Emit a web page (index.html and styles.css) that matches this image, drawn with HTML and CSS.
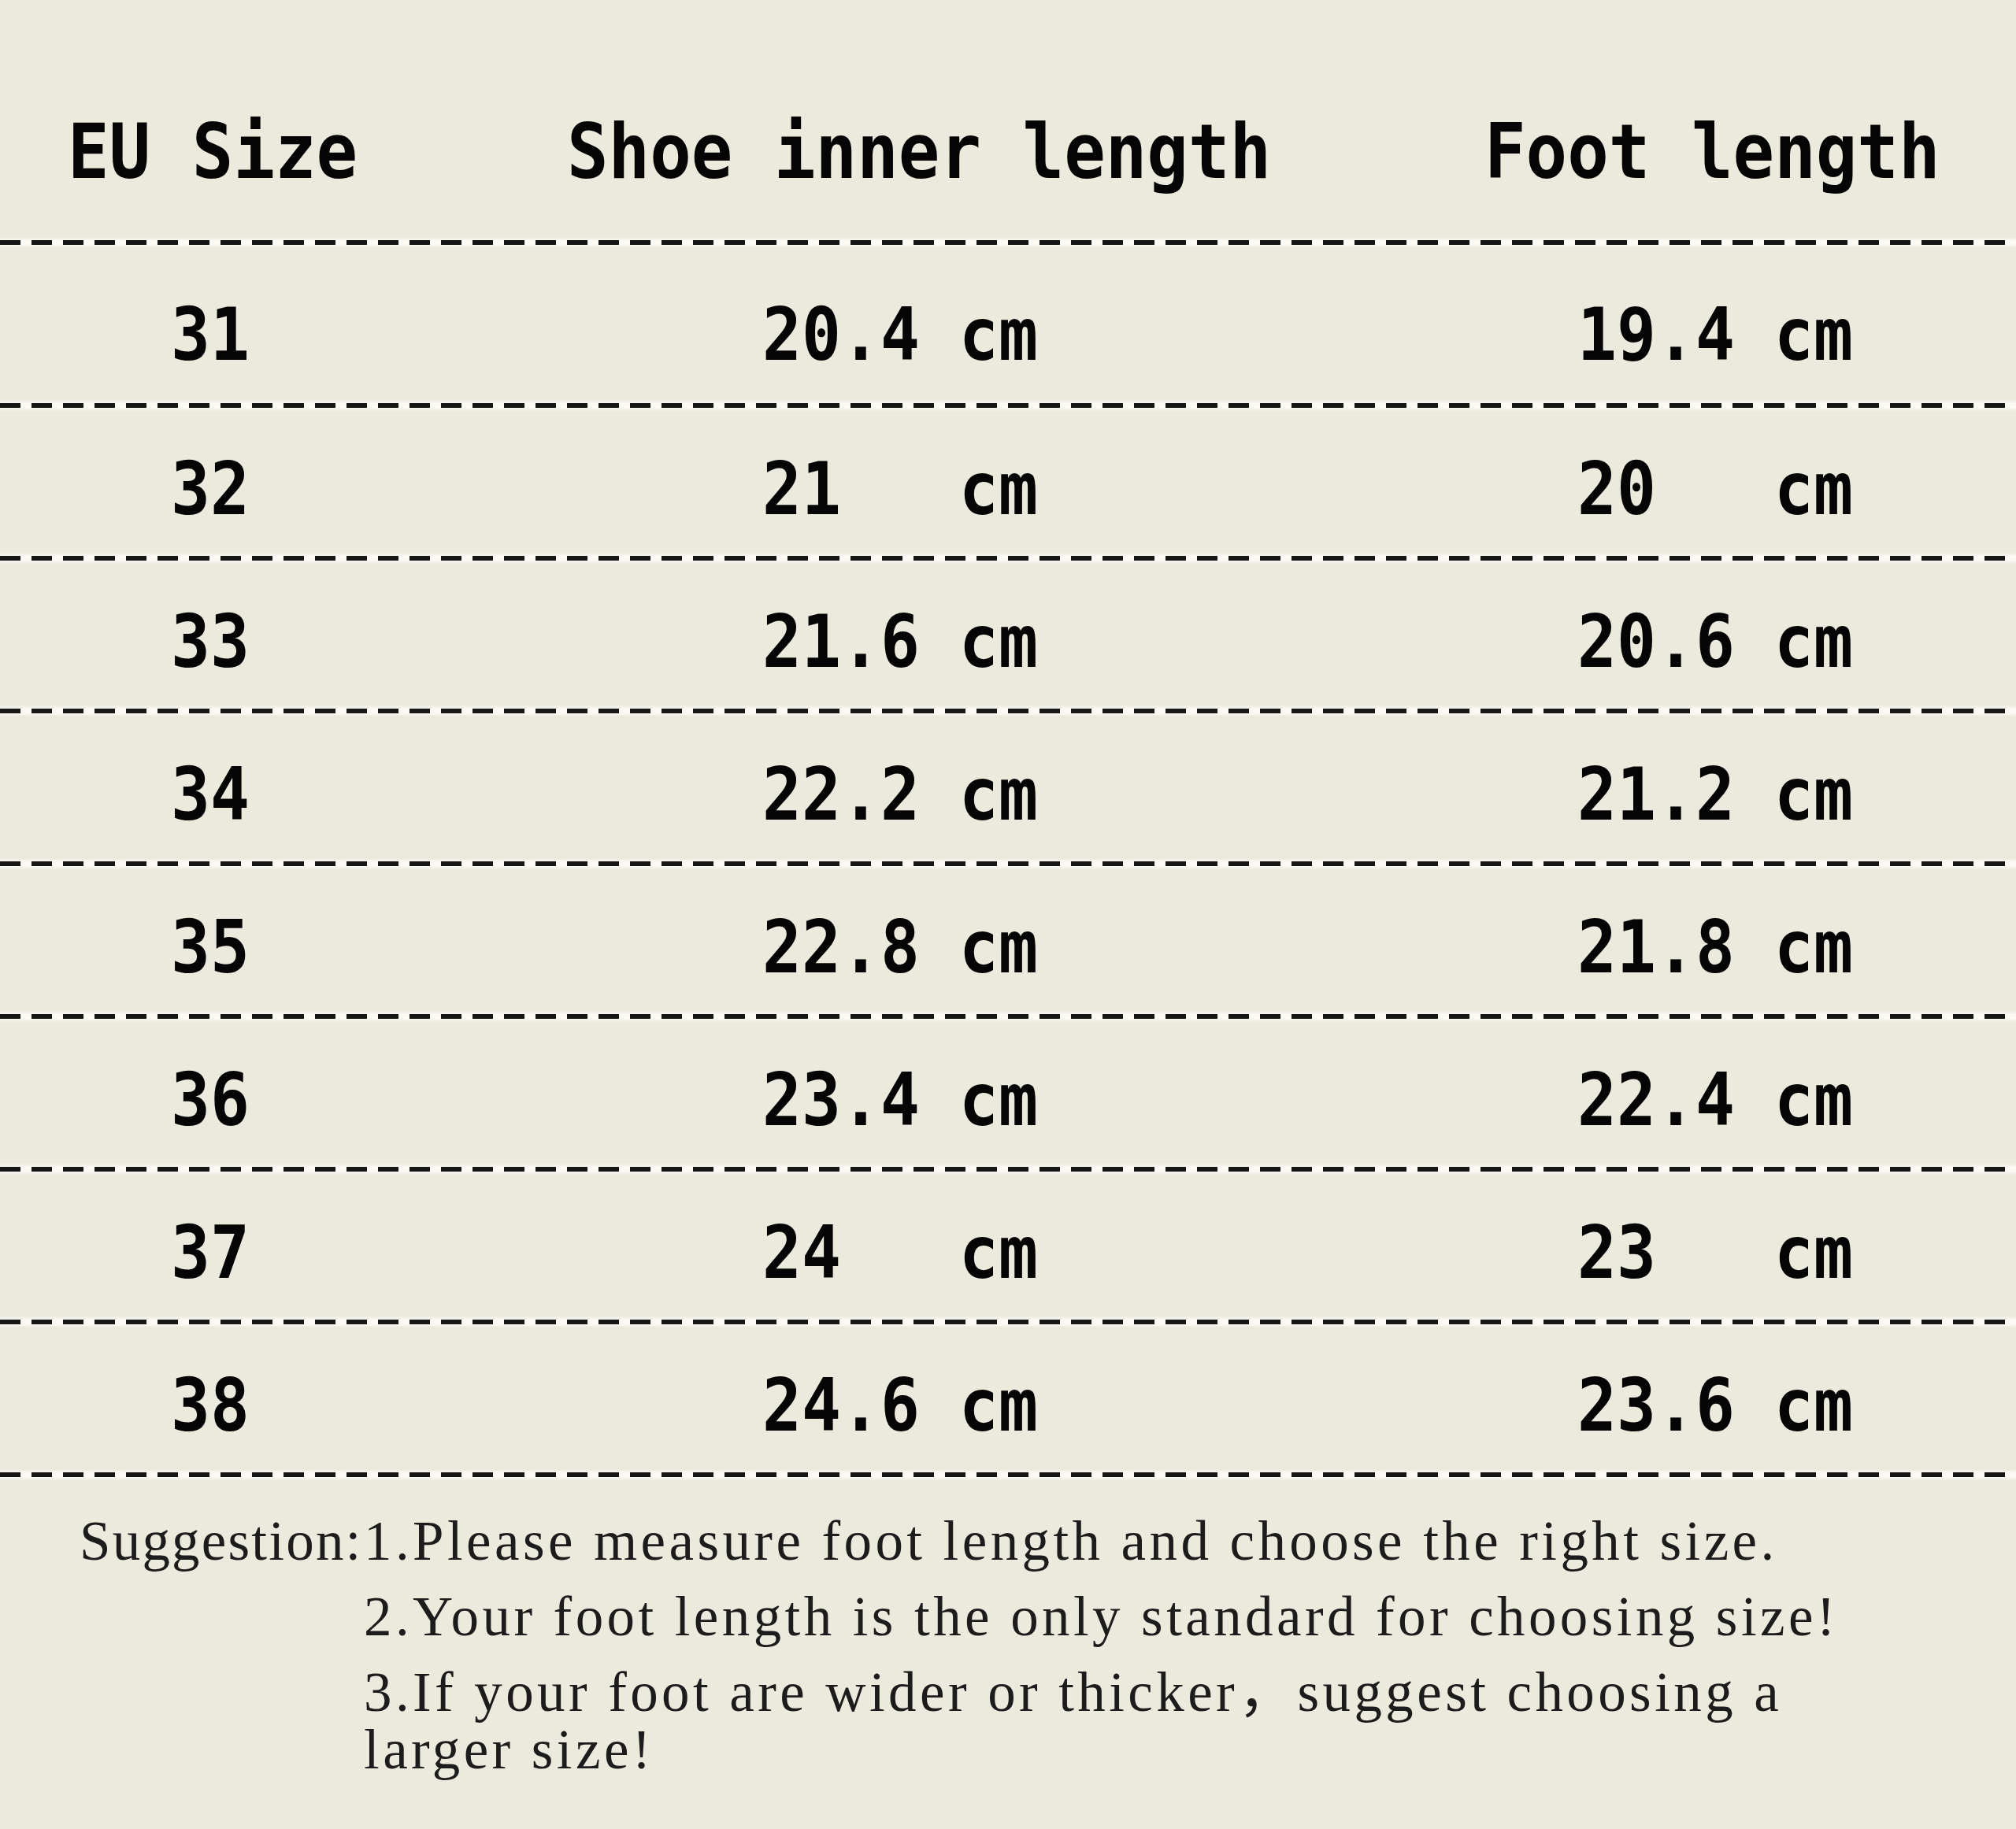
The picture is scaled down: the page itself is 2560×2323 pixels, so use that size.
FILE: index.html
```html
<!DOCTYPE html>
<html lang="en">
<head>
<meta charset="utf-8">
<title>Size Chart</title>
<link rel="stylesheet" href="styles.css">
</head>
<body>
<main class="chart">
  <div class="head">
    <div class="cell"><span class="mono">EU Size</span></div>
    <div class="cell"><span class="mono">Shoe inner length</span></div>
    <div class="cell"><span class="mono">Foot length</span></div>
  </div>
  <div class="rule"></div>

  <div class="row row-first">
    <div class="cell"><span class="mono">31</span></div>
    <div class="cell"><span class="mono">20<span class="dot">.</span>4 cm</span></div>
    <div class="cell"><span class="mono">19<span class="dot">.</span>4 cm</span></div>
  </div>
  <div class="rule"></div>

  <div class="row">
    <div class="cell"><span class="mono">32</span></div>
    <div class="cell"><span class="mono">21   cm</span></div>
    <div class="cell"><span class="mono">20   cm</span></div>
  </div>
  <div class="rule"></div>

  <div class="row">
    <div class="cell"><span class="mono">33</span></div>
    <div class="cell"><span class="mono">21<span class="dot">.</span>6 cm</span></div>
    <div class="cell"><span class="mono">20<span class="dot">.</span>6 cm</span></div>
  </div>
  <div class="rule"></div>

  <div class="row">
    <div class="cell"><span class="mono">34</span></div>
    <div class="cell"><span class="mono">22<span class="dot">.</span>2 cm</span></div>
    <div class="cell"><span class="mono">21<span class="dot">.</span>2 cm</span></div>
  </div>
  <div class="rule"></div>

  <div class="row">
    <div class="cell"><span class="mono">35</span></div>
    <div class="cell"><span class="mono">22<span class="dot">.</span>8 cm</span></div>
    <div class="cell"><span class="mono">21<span class="dot">.</span>8 cm</span></div>
  </div>
  <div class="rule"></div>

  <div class="row">
    <div class="cell"><span class="mono">36</span></div>
    <div class="cell"><span class="mono">23<span class="dot">.</span>4 cm</span></div>
    <div class="cell"><span class="mono">22<span class="dot">.</span>4 cm</span></div>
  </div>
  <div class="rule"></div>

  <div class="row">
    <div class="cell"><span class="mono">37</span></div>
    <div class="cell"><span class="mono">24   cm</span></div>
    <div class="cell"><span class="mono">23   cm</span></div>
  </div>
  <div class="rule"></div>

  <div class="row">
    <div class="cell"><span class="mono">38</span></div>
    <div class="cell"><span class="mono">24<span class="dot">.</span>6 cm</span></div>
    <div class="cell"><span class="mono">23<span class="dot">.</span>6 cm</span></div>
  </div>
  <div class="rule"></div>

  <section class="note">
    <div class="note-label">Suggestion:</div>
    <ol class="note-list">
      <li>1.Please measure foot length and choose the right size.</li>
      <li>2.Your foot length is the only standard for choosing size!</li>
      <li>3.If your foot are wider or thicker，suggest choosing a larger size!</li>
    </ol>
  </section>
</main>
</body>
</html>
```
FILE: styles.css
```css
html, body {
  margin: 0;
  padding: 0;
  background: #eceadd;
}

.chart {
  box-sizing: border-box;
  width: 2560px;
  min-height: 2323px;
  padding-top: 145px;
  background: #eceadd;
  color: #050505;
}

.mono {
  display: inline-block;
  font-family: "DejaVu Sans Mono", "Liberation Mono", monospace;
  font-weight: bold;
  white-space: pre;
  transform-origin: left center;
}

.head {
  display: grid;
  grid-template-columns: 634px 1165px 1fr;
  padding-left: 86px;
  height: 96px;
  font-size: 96px;
  line-height: 96px;
  margin-bottom: 60px;
}

.head .mono {
  transform: scaleX(0.91);
}

.row {
  display: grid;
  grid-template-columns: 751px 1035px 1fr;
  padding: 53px 0 34px 217px;
  font-size: 93px;
  line-height: 93px;
}

.row-first {
  padding-top: 64px;
  padding-bottom: 36px;
}

.row .mono {
  transform: scaleX(0.893);
}

.dot {
  display: inline-block;
  width: 0.5em;
  margin-right: 0.102em;
  text-align: left;
  overflow: visible;
}

.rule {
  height: 14px;
  background:
    repeating-linear-gradient(90deg, #161616 0 26px, transparent 26px 40px) center / 100% 6px no-repeat,
    linear-gradient(to bottom, rgba(255,255,255,0) 0%, #faf9f3 30%, #faf9f3 70%, rgba(255,255,255,0) 100%);
}

.note {
  display: grid;
  grid-template-columns: 361px 1978px;
  align-items: start;
  padding-left: 101px;
  margin-top: 41px;
  font-family: "Liberation Serif", "Noto Sans CJK SC", serif;
  font-size: 71px;
  line-height: 73px;
  color: #1c1c1c;
}

.note-label {
  letter-spacing: 2.2px;
  white-space: nowrap;
}

.note-list {
  list-style: none;
  margin: 0;
  padding: 0;
  display: flex;
  flex-direction: column;
  gap: 23px;
  letter-spacing: 4.4px;
}

.note-list li {
  margin: 0;
}
```
